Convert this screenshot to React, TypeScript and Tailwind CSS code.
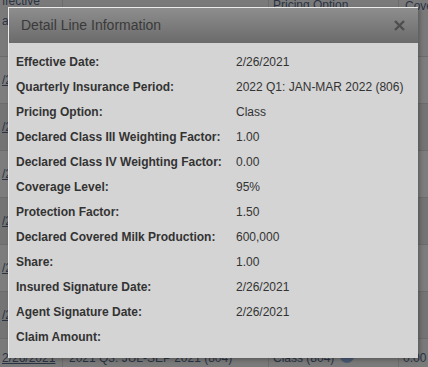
const details = [
  ["Effective Date:", "2/26/2021"],
  ["Quarterly Insurance Period:", "2022 Q1: JAN-MAR 2022 (806)"],
  ["Pricing Option:", "Class"],
  ["Declared Class III Weighting Factor:", "1.00"],
  ["Declared Class IV Weighting Factor:", "0.00"],
  ["Coverage Level:", "95%"],
  ["Protection Factor:", "1.50"],
  ["Declared Covered Milk Production:", "600,000"],
  ["Share:", "1.00"],
  ["Insured Signature Date:", "2/26/2021"],
  ["Agent Signature Date:", "2/26/2021"],
  ["Claim Amount:", ""],
];

function BackgroundTable() {
  const rows = [0, 1, 2, 3, 4, 5];
  return (
    <div className="w-[428px] h-[367px] overflow-hidden bg-[#7a7a7a] text-[12px] text-[#2a3344]">
      <div className="grid grid-cols-[62px_206px_130px_30px] h-[57px] border-b border-[#6c6c6c]">
        <div className="pl-[2px] leading-none -mt-[5px]">
          <div>ffective</div>
          <div className="mt-[8px]">a</div>
        </div>
        <div className="border-l border-[#6c6c6c]" />
        <div className="border-l border-[#6c6c6c] pl-[4px] -mt-[4px]">Pricing Option</div>
        <div className="border-l border-[#6c6c6c] pl-[6px] leading-[20px] -mt-[4px]">
          <div>Cove</div>
          <div>k</div>
          <div>d</div>
        </div>
      </div>
      {rows.map((r) => (
        <div
          key={r}
          className={`grid grid-cols-[62px_206px_130px_30px] h-[47px] items-center border-b border-[#6c6c6c] ${
            r % 2 === 0 ? "bg-[#7d7d7d]" : "bg-[#747474]"
          }`}
        >
          <div className="pl-[2px] underline">/2</div>
          <div className="border-l border-[#6c6c6c] h-full" />
          <div className="border-l border-[#6c6c6c] h-full" />
          <div className="border-l border-[#6c6c6c] h-full flex items-center pl-[6px]">0,</div>
        </div>
      ))}
      <div className="grid grid-cols-[62px_206px_130px_30px] h-[47px] pt-[10px]">
        <div className="pl-[2px] underline">2/26/2021</div>
        <div className="border-l border-[#6c6c6c] pl-[6px]">2021 Q3: JUL-SEP 2021 (804)</div>
        <div className="border-l border-[#6c6c6c] pl-[4px] flex gap-[6px]">
          Class (804)
          <span className="w-[14px] h-[14px] rounded-full bg-[#4a5a72]" />
        </div>
        <div className="border-l border-[#6c6c6c] pl-[4px]">0.00</div>
      </div>
    </div>
  );
}

export default function App() {
  return (
    <div className="relative w-[428px] h-[367px] overflow-hidden" style={{ fontFamily: '"Liberation Sans", Arial, sans-serif' }}>
      <BackgroundTable />
      <div className="absolute left-[8px] top-[7px] w-[410px] h-[351px] flex flex-col bg-[#d4d4d4] border-l border-t border-[#ececec] shadow-[2px_2px_4px_rgba(0,0,0,0.25)]">
        <div className="h-[35px] shrink-0 flex items-center justify-between pl-[12px] pr-[12px] bg-gradient-to-b from-[#8e8e8e] to-[#6b6b6b]">
          <span className="text-[14px] text-[#3a3a3a]">Detail Line Information</span>
          <svg width="11" height="11" viewBox="0 0 11 11" className="mr-[1px]">
            <path d="M1 1 L10 10 M10 1 L1 10" stroke="#4e4e4e" strokeWidth="2.4" strokeLinecap="butt" />
          </svg>
        </div>
        <div className="pt-[6px] pl-[7px]">
          {details.map(([label, value]) => (
            <div key={label} className="flex items-center h-[25px] text-[12px] text-[#333333]">
              <div className="w-[220px] font-bold">{label}</div>
              <div>{value}</div>
            </div>
          ))}
        </div>
      </div>
    </div>
  );
}
